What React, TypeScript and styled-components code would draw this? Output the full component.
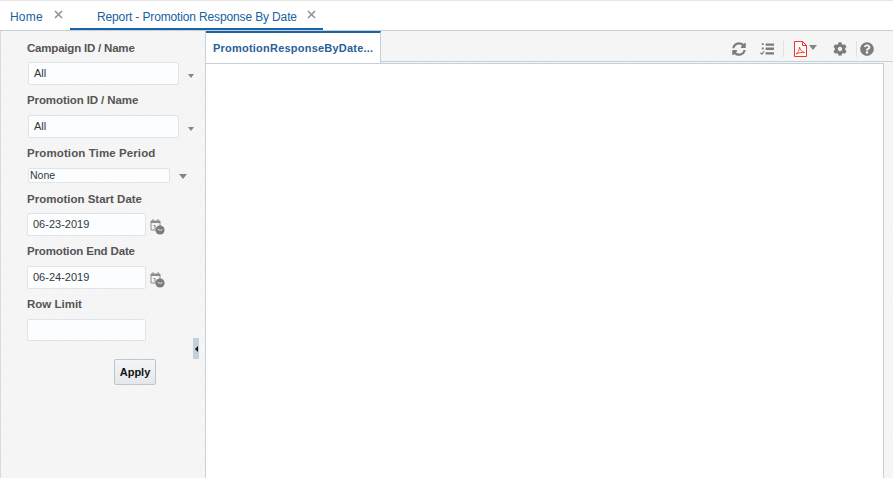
import React from "react";
import styled, { createGlobalStyle } from "styled-components";
import { FaSyncAlt, FaCog, FaQuestionCircle } from "react-icons/fa";

const Global = createGlobalStyle`
  html, body { margin: 0; padding: 0; background: #fff; }
  body { font-family: "Liberation Sans", Arial, sans-serif; }
  * { box-sizing: border-box; }
`;

const hatch = `repeating-linear-gradient(135deg, #f7f7f7 0, #f7f7f7 1px, #f4f4f4 1px, #f4f4f4 3px)`;

const Page = styled.div`
  width: 893px;
  height: 478px;
  display: flex;
  flex-direction: column;
  overflow: hidden;
  border-top: 1px solid #e6e6e6;
`;
const TabBar = styled.div`
  height: 30px;
  display: flex;
  border-bottom: 1px solid #c5d0da;
  background: #fff;
  flex: none;
`;
const PageTab = styled.div<{ $w: number; $pad: number; $active?: boolean }>`
  width: ${(p) => p.$w}px;
  height: 29px;
  padding-left: ${(p) => p.$pad}px;
  display: flex;
  align-items: center;
  font-size: 12px;
  color: #17629f;
  border-bottom: ${(p) => (p.$active ? "2px solid #1a63a5" : "none")};
  padding-top: ${(p) => (p.$active ? "5px" : "3px")};
`;
const TabLabel = styled.span<{ $ls: number }>`
  letter-spacing: ${(p) => p.$ls}px;
`;
const CloseMark = styled.svg<{ $ml: number }>`
  width: 9px;
  height: 9px;
  margin-left: ${(p) => p.$ml}px;
  margin-top: -5px;
  stroke: #8c949b;
  stroke-width: 1.6;
  fill: none;
`;
const Body = styled.div`
  flex: 1;
  display: flex;
  min-height: 0;
  background: ${hatch};
`;
const Side = styled.div`
  position: relative;
  width: 206px;
  flex: none;
  padding: 11px 0 0 26px;
  border-left: 1px solid #d5dbe0;
  border-right: 1px solid #c9d2da;
`;
const FieldLabel = styled.div<{ $top: number; $ls?: number }>`
  font-size: 11.5px;
  font-weight: 700;
  color: #555;
  line-height: 13px;
  height: 13px;
  white-space: nowrap;
  letter-spacing: ${(p) => p.$ls ?? 0}px;
  margin-top: ${(p) => p.$top}px;
`;
const Row = styled.div<{ $top: number; $h: number; $ml?: number }>`
  display: flex;
  align-items: center;
  height: ${(p) => p.$h}px;
  margin-top: ${(p) => p.$top}px;
  margin-left: ${(p) => p.$ml ?? 0}px;
`;
const Field = styled.div<{ $w: number; $h: number; $pad?: number; $size?: number }>`
  width: ${(p) => p.$w}px;
  height: ${(p) => p.$h}px;
  padding-left: ${(p) => p.$pad ?? 5}px;
  padding-bottom: 2px;
  display: flex;
  align-items: center;
  font-size: ${(p) => p.$size ?? 11}px;
  color: #2c3a40;
  background: #fcfdff;
  border: 1px solid #dfe4e8;
  border-radius: 2px;
`;
const Arrow = styled.i<{ $size: number; $ml: number; $mt: number }>`
  width: 0;
  height: 0;
  border-left: ${(p) => p.$size}px solid transparent;
  border-right: ${(p) => p.$size}px solid transparent;
  border-top: ${(p) => p.$size + 1}px solid #858585;
  margin-left: ${(p) => p.$ml}px;
  margin-top: ${(p) => p.$mt}px;
`;
const Footer = styled.div`
  display: flex;
  justify-content: flex-end;
  width: 129px;
  margin-top: 18px;
`;
const ApplyButton = styled.button`
  width: 42px;
  height: 26px;
  padding: 0;
  font-family: inherit;
  font-size: 11px;
  font-weight: 700;
  color: #111;
  background: linear-gradient(#f3f5f7, #e4e8ec);
  border: 1px solid #bcc6cf;
  border-radius: 2px;
`;
const Splitter = styled.div`
  position: absolute;
  left: 192px;
  top: 307px;
  width: 6px;
  height: 21px;
  background: #c5d0da;
  display: flex;
  align-items: center;
  justify-content: center;
  &::after {
    content: "";
    border-right: 3px solid #111;
    border-top: 3px solid transparent;
    border-bottom: 3px solid transparent;
  }
`;
const Main = styled.div`
  flex: 1;
  display: flex;
  flex-direction: column;
  min-width: 0;
`;
const Head = styled.div`
  height: 32px;
  flex: none;
  display: flex;
  justify-content: space-between;
`;
const DocTab = styled.div`
  width: 175px;
  height: 32px;
  background: #fff;
  border-top: 2px solid #1a63a5;
  border-right: 1px solid #c5d0da;
  padding-left: 7px;
  display: flex;
  align-items: center;
  font-size: 11px;
  font-weight: 700;
  color: #2a5f97;
  letter-spacing: 0.22px;
  padding-bottom: 1px;
`;
const HeadRest = styled.div`
  flex: 1;
  height: 31px;
  border-bottom: 1px solid #c5d0da;
  display: flex;
  align-items: center;
  justify-content: flex-end;
  padding: 5px 19px 0 0;
  color: #7c7c7c;
`;
const ToolSlot = styled.span<{ $ml: number }>`
  display: flex;
  flex: none;
  margin-left: ${(p) => p.$ml}px;
`;
const Sep = styled.div<{ $ml: number }>`
  width: 1px;
  height: 16px;
  background: #e1e1e1;
  margin-left: ${(p) => p.$ml}px;
`;
const Content = styled.div`
  flex: 1;
  background: #fff;
  border-top: 1px solid #c5d0da;
  border-right: 1px solid #c5d0da;
  margin-right: 9px;
`;
const CalSvg = styled.svg`
  flex: none;
  margin-left: 4px;
  margin-top: 3px;
`;

const Close = ({ ml }: { ml: number }) => (
  <CloseMark $ml={ml} viewBox="0 0 9 9">
    <path d="M1 1 8 8M8 1 1 8" />
  </CloseMark>
);

const Calendar = () => (
  <CalSvg width="15" height="17" viewBox="0 0 15 17">
    <path d="M1 3h9v9H1z" fill="#f4f4f4" stroke="#8b8b8b" />
    <path d="M1 3h9v2H1zM2.5 1h1v3h-1zM7.5 1h1v3h-1z" fill="#8b8b8b" />
    <path d="M3.5 7h2v4h-1V8h-1z" fill="#8b8b8b" />
    <circle cx="10" cy="12" r="4.6" fill="#7b7b7b" />
    <path d="M7.7 11.2 10.2 12.4 12.4 11.6" stroke="#e8e8e8" strokeWidth="1" fill="none" />
  </CalSvg>
);

export default function App() {
  return (
    <Page>
      <Global />
      <TabBar>
        <PageTab $w={70} $pad={10}>
          <TabLabel $ls={0.2}>Home</TabLabel>
          <Close ml={11} />
        </PageTab>
        <PageTab $w={253} $pad={27} $active>
          <TabLabel $ls={-0.14}>Report - Promotion Response By Date</TabLabel>
          <Close ml={10} />
        </PageTab>
      </TabBar>
      <Body>
        <Side>
          <FieldLabel $top={0} $ls={-0.2}>Campaign ID / Name</FieldLabel>
          <Row $top={7} $h={23} $ml={1}>
            <Field $w={151} $h={23}>All</Field>
            <Arrow $size={3} $ml={9} $mt={4} />
          </Row>
          <FieldLabel $top={9} $ls={-0.1}>Promotion ID / Name</FieldLabel>
          <Row $top={8} $h={23} $ml={1}>
            <Field $w={151} $h={23}>All</Field>
            <Arrow $size={3} $ml={9} $mt={4} />
          </Row>
          <FieldLabel $top={9} $ls={0.1}>Promotion Time Period</FieldLabel>
          <Row $top={8} $h={15} $ml={1}>
            <Field $w={142} $h={15} $pad={1} $size={10.5}>None</Field>
            <Arrow $size={4} $ml={9} $mt={1} />
          </Row>
          <FieldLabel $top={10}>Promotion Start Date</FieldLabel>
          <Row $top={7} $h={23}>
            <Field $w={119} $h={23}>06-23-2019</Field>
            <Calendar />
          </Row>
          <FieldLabel $top={9} $ls={-0.15}>Promotion End Date</FieldLabel>
          <Row $top={8} $h={23}>
            <Field $w={119} $h={23}>06-24-2019</Field>
            <Calendar />
          </Row>
          <FieldLabel $top={9}>Row Limit</FieldLabel>
          <Row $top={8} $h={22}>
            <Field $w={119} $h={22} />
          </Row>
          <Footer>
            <ApplyButton>Apply</ApplyButton>
          </Footer>
          <Splitter />
        </Side>
        <Main>
          <Head>
            <DocTab>PromotionResponseByDate...</DocTab>
            <HeadRest>
              <ToolSlot $ml={0}>
                <FaSyncAlt size={14} />
              </ToolSlot>
              <ToolSlot $ml={14}>
                <svg width="14" height="14" viewBox="0 0 15 14" fill="currentColor">
                  <path d="M6 1h9v2.500H6zM6 5.500h9V8H6zM6 10.500h9V13H6zM2 .8h2v2H2zM2 5.500h2v2H2z" />
                  <path d="M.5 11 2 12.500 4.500 9.500" stroke="currentColor" strokeWidth="1.200" fill="none" />
                </svg>
              </ToolSlot>
              <Sep $ml={9} />
              <ToolSlot $ml={10}>
                <svg width="13" height="16" viewBox="0 0 13 16">
                  <path d="M.5.500h8l4 4v11H.5z" fill="#fff" stroke="#f0352b" />
                  <path d="M8.500.500v4h4" fill="none" stroke="#f0352b" />
                  <path d="M2 13c2-1 3.500-4 3.500-7 .5 3 2.500 5 5 5.500-3-.3-6 .2-8.500 1.500Z" fill="none" stroke="#f0352b" strokeWidth=".9" />
                </svg>
              </ToolSlot>
              <Arrow $size={4} $ml={2} $mt={-2} />
              <ToolSlot $ml={16}>
                <FaCog size={14} />
              </ToolSlot>
              <Sep $ml={9} />
              <ToolSlot $ml={3}>
                <FaQuestionCircle size={14} />
              </ToolSlot>
            </HeadRest>
          </Head>
          <Content />
        </Main>
      </Body>
    </Page>
  );
}
